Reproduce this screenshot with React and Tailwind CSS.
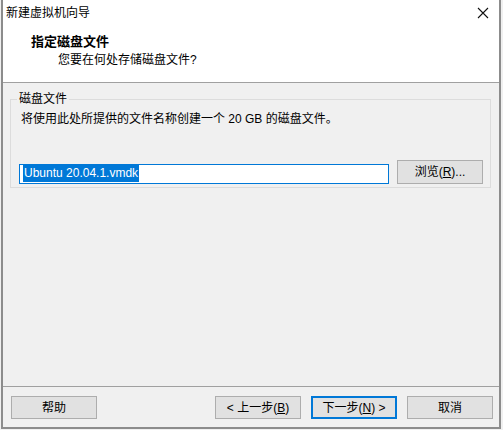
import React from "react";

const font = { fontFamily: '"Liberation Sans", "Noto Sans CJK SC", "Noto Sans", sans-serif' };

function Btn({ children, primary, className = "" }) {
  return (
    <button
      className={`h-[23px] w-[86px] bg-[#e1e1e1] text-[12px] leading-none text-black ${
        primary ? "border-2 border-[#0078d7]" : "border border-[#adadad]"
      } ${className}`}
    >
      {children}
    </button>
  );
}

export default function App() {
  return (
    <div className="w-[503px] h-[430px] bg-[#f0f0f0] pl-[1px] overflow-hidden" style={font}>
      <div className="w-[500px] h-[429px] border-x-2 border-b-2 border-[#8c8c8c] flex flex-col bg-[#f0f0f0]">
        {/* header */}
        <div className="h-[83px] bg-white border-b border-[#a0a0a0] flex flex-col">
          <div className="h-[25px] flex items-center justify-between pl-[3px] pr-[10px]">
            <span className="text-[12px] text-black leading-none">新建虚拟机向导</span>
            <svg width="12" height="12" viewBox="0 0 12 12">
              <path d="M1 1 L11 11 M11 1 L1 11" stroke="#111" strokeWidth="1.1" />
            </svg>
          </div>
          <div className="pl-[28px] pt-[10px] text-[13px] font-bold leading-none text-black">指定磁盘文件</div>
          <div className="pl-[55px] pt-[6px] text-[12px] leading-none text-black">您要在何处存储磁盘文件?</div>
        </div>

        {/* body */}
        <div className="flex-1 px-[7px] pt-[16px]">
          <div className="relative h-[89px] w-[481px] border border-[#dcdcdc] pl-[8px] pr-[7px]">
            <span className="absolute -top-[9px] left-[6px] bg-[#f0f0f0] px-[2px] text-[12px] leading-[16px] text-black">
              磁盘文件
            </span>
            <div className="pt-[11px] pl-[2px] text-[12px] leading-[16px] text-black">
              将使用此处所提供的文件名称创建一个 20 GB 的磁盘文件。
            </div>
            <div className="mt-[33px] flex items-center gap-[8px] w-full">
              <div className="mt-[3px] h-[20px] flex-1 min-w-0 border border-[#0078d7] bg-white flex items-center pl-[3px]">
                <span className="bg-[#0078d7] text-white text-[12px] leading-[17px] px-[1px]">Ubuntu 20.04.1.vmdk</span>
              </div>
              <button className="h-[24px] w-[86px] shrink-0 bg-[#e1e1e1] border border-[#adadad] text-[12px] leading-none text-black">
                浏览(<span className="underline">R</span>)...
              </button>
            </div>
          </div>
        </div>

        {/* footer */}
        <div className="h-[41px] border-t border-[#a0a0a0] flex items-start pt-[9px] pl-[8px] pr-[6px]">
          <Btn>帮助</Btn>
          <div className="flex-1" />
          <Btn>&lt; 上一步(<span className="underline">B</span>)</Btn>
          <Btn primary className="ml-[10px]">下一步(<span className="underline">N</span>) &gt;</Btn>
          <Btn className="ml-[10px]">取消</Btn>
        </div>
      </div>
    </div>
  );
}
